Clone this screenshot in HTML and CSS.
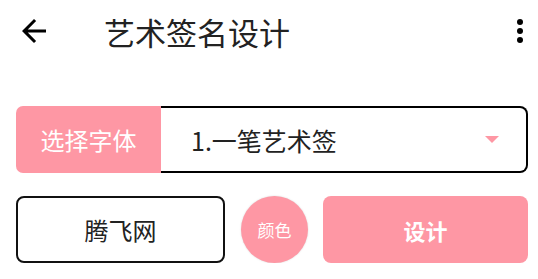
FILE: index.html
```html
<!DOCTYPE html>
<html lang="zh">
<head>
  <meta charset="UTF-8">
  <title>艺术签名设计</title>
  <link rel="stylesheet" href="styles.css">
</head>
<body>

<div class="toolbar">
  <button class="icon-btn back">
    <svg width="36" height="36" viewBox="0 0 24 24"><path d="M20 11H7.83l5.59-5.59L12 4l-8 8 8 8 1.41-1.41L7.83 13H20v-2z" fill="#000"/></svg>
  </button>
  <h1 class="title">艺术签名设计</h1>
  <button class="icon-btn more">
    <svg width="36" height="36" viewBox="0 0 24 24"><circle cx="12" cy="6" r="2" fill="#000"/><circle cx="12" cy="12" r="2" fill="#000"/><circle cx="12" cy="18" r="2" fill="#000"/></svg>
  </button>
</div>

<div class="content">
  <!-- font picker -->
  <div class="font-row">
    <div class="font-label">选择字体</div>
    <div class="font-select">
      <span>1.一笔艺术签</span>
      <span class="caret"></span>
    </div>
  </div>

  <!-- actions -->
  <div class="action-row">
    <button class="name-btn">腾飞网</button>
    <button class="color-btn">颜色</button>
    <button class="design-btn">设计</button>
  </div>
</div>

</body>
</html>
```

FILE: styles.css
```css
:root {
  --pink: #fe97a4;
  --text: #222;
}

body {
  margin: 0;
  background: #fff;
  color: var(--text);
  font-family: "Noto Sans CJK SC", "Noto Sans", sans-serif;
}

button {
  font-family: inherit;
  cursor: pointer;
  box-sizing: border-box;
  padding: 0;
}

.toolbar {
  display: flex;
  align-items: center;
  height: 62px;
  padding: 0 0 0 16px;
}

.icon-btn {
  border: none;
  background: none;
  width: 36px;
  height: 36px;
  display: flex;
}

.title {
  flex: 1;
  margin: 0 0 0 52px;
  font-size: 31px;
  font-weight: normal;
  color: var(--text);
}

.content {
  padding: 44px 10px 0 16px;
}

.font-row {
  display: flex;
  height: 67px;
}

.font-label {
  width: 145px;
  background: var(--pink);
  color: #fff;
  font-size: 24px;
  border-radius: 7px 0 0 7px;
  display: flex;
  align-items: center;
  justify-content: center;
}

.font-select {
  flex: 1;
  display: flex;
  align-items: center;
  justify-content: space-between;
  border: 2px solid #000;
  border-left: none;
  border-radius: 0 8px 8px 0;
  padding: 0 27px 0 30px;
  font-size: 25px;
}

.caret {
  width: 0;
  height: 0;
  border-left: 7.5px solid transparent;
  border-right: 7.5px solid transparent;
  border-top: 7px solid var(--pink);
}

.action-row {
  display: flex;
  align-items: center;
  margin-top: 23px;
  height: 67px;
}

.name-btn {
  flex: 1;
  height: 67px;
  background: #fff;
  border: 2px solid #111;
  border-radius: 8px;
  font-size: 24px;
  color: var(--text);
}

.color-btn {
  width: 67px;
  height: 67px;
  margin: 0 15px 0 16px;
  border: none;
  border-radius: 50%;
  background: var(--pink);
  color: #fff;
  font-size: 17px;
  box-shadow: 0 0 2px rgba(0, 0, 0, 0.15);
}

.design-btn {
  flex: 1;
  height: 67px;
  border: none;
  border-radius: 8px;
  background: var(--pink);
  color: #fff;
  font-size: 22px;
  font-weight: bold;
}
```
